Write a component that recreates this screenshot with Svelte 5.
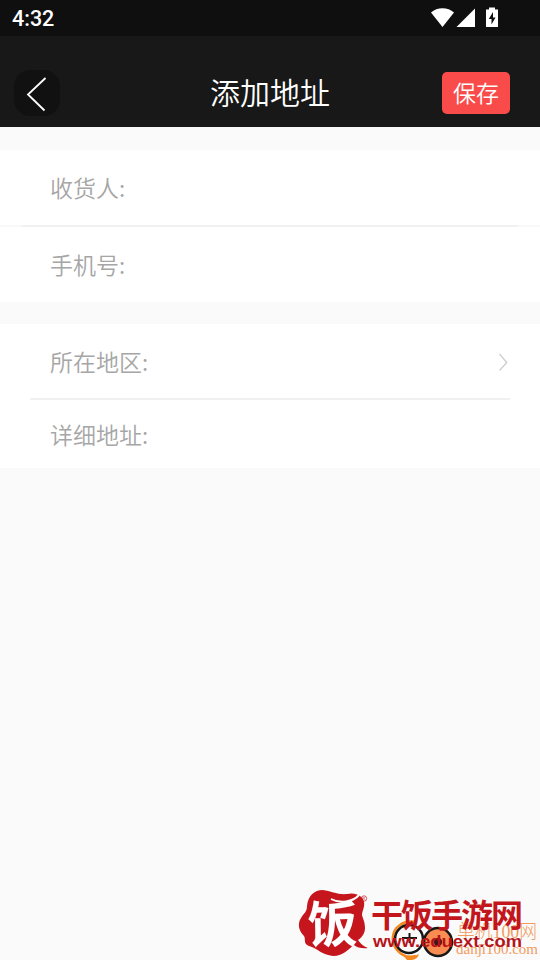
<script>
  let title = '添加地址';

  let contact = [
    { name: 'receiver', label: '收货人:' },
    { name: 'phone', label: '手机号:' }
  ];
</script>

<div class="page">
  <div class="status-bar">
    <span class="time">4:32</span>
    <svg class="status-icons" width="70" height="36" viewBox="430 0 70 36">
      <path d="M431 12.500C437 6.700 448 6.700 454 12.500L442.500 27Z" />
      <path d="M456.500 27L475 8.500V27Z" />
      <path d="M486 9.500h3V7.500h6v2h3V27H486Z" />
      <path class="bolt" d="M493 12L488.800 19H491.500V24.500L495.500 17.500H493Z" />
    </svg>
  </div>

  <header class="nav">
    <button class="back" aria-label="返回">
      <svg width="46" height="46" viewBox="0 0 46 46">
        <path d="M31.500 8L14 24.500L30.500 40.500" />
      </svg>
    </button>
    <h1>{title}</h1>
    <button class="save">保存</button>
  </header>

  <section class="group contact">
    {#each contact as field (field.name)}
      <div class="row">
        <span class="label">{field.label}</span>
      </div>
    {/each}
  </section>

  <section class="group address">
    <div class="row region">
      <span class="label">所在地区:</span>
      <svg class="arrow" width="12" height="20" viewBox="0 0 12 20">
        <path d="M1.500 3L8.800 11.500L1.500 19.500" />
      </svg>
    </div>
    <div class="row detail">
      <span class="label">详细地址:</span>
    </div>
  </section>

  <svg class="watermark" width="250" height="80" viewBox="290 880 250 80">
    <g class="danji">
      <path class="ring" d="M415 922C409 921 404 922 400 925C391 931 391 943 397 950C402 956 409 958 416 956" />
      <path class="ring-tip" d="M402 954Q410 959 419 954Q418 959 412 960H407Z" />
      <circle class="eye" cx="409" cy="939" r="14" />
      <path class="mark" d="M402 938H417M409.500 933V943" />
      <circle class="eye fill" cx="438" cy="942" r="14" />
      <circle class="pupil" cx="438" cy="942" r="4" />
      <text class="danji-name" x="457" y="938" textLength="80" lengthAdjust="spacingAndGlyphs">单机100网</text>
      <text class="danji-url" x="456" y="954" textLength="82" lengthAdjust="spacingAndGlyphs">danji100.com</text>
    </g>
    <path class="seal" d="M307 906C308 896 314 890 323 890C331 891 338 895 347 894C356 892 363 896 364 902C365 907 362 911 362 915C363 919 365 922 365 928C365 934 361 938 358 940Q362 946 368 948Q359 949 354 945C348 949 344 956 333 956C322 955 317 948 309 946C303 944 306 939 304 936C299 931 297 924 301 918C304 913 307 912 307 906Z" />
    <path class="fold" d="M331 899C340 904 353 902 359 895" />
    <text class="seal-text" transform="translate(308 943) rotate(-1)">饭</text>
    <circle class="reg" cx="364" cy="898.500" r="2.700" />
    <text class="reg-text" x="362.500" y="900">R</text>
    <text class="brand" x="371" y="927" textLength="152">干饭手游网</text>
    <text class="brand-url" x="373" y="947" textLength="149" lengthAdjust="spacingAndGlyphs">www.eduext.com</text>
  </svg>
</div>

<style>
  :global(body) {
    margin: 0;
    background: #fafafa;
  }
  .page {
    position: relative;
    width: 540px;
    height: 960px;
    overflow: hidden;
    background: #fafafa;
    font-family: 'Noto Sans CJK SC', sans-serif;
  }
  .status-bar {
    display: flex;
    justify-content: space-between;
    box-sizing: border-box;
    height: 36px;
    padding: 0 40px 0 12px;
    background: #0f0f0f;
  }
  .time {
    color: #fff;
    font: 500 21.5px/38px Roboto, sans-serif;
  }
  .status-icons {
    fill: #fff;
  }
  .status-icons .bolt {
    fill: #0f0f0f;
  }
  .nav {
    display: grid;
    grid-template-columns: 98px 1fr 98px;
    align-items: center;
    box-sizing: border-box;
    height: 91px;
    padding-top: 23px;
    background: #181818;
  }
  button {
    padding: 0;
    border: 0;
    font-family: inherit;
  }
  .back {
    width: 46px;
    height: 46px;
    margin-left: 14px;
    border-radius: 16px;
    background: #111;
  }
  .back svg {
    display: block;
  }
  .back path {
    fill: none;
    stroke: #fff;
    stroke-width: 1.8;
  }
  h1 {
    margin: 0;
    padding-bottom: 4px;
    color: #fff;
    font-size: 30px;
    font-weight: 350;
    line-height: 44px;
    text-align: center;
  }
  .save {
    width: 68px;
    height: 42px;
    padding-bottom: 1px;
    border-radius: 5px;
    background: #fa4b4b;
    color: #fff;
    font-size: 23px;
    font-weight: 350;
    line-height: 41px;
  }
  .group {
    background: #fff;
  }
  .contact {
    margin-top: 23px;
  }
  .address {
    margin-top: 22px;
  }
  .row {
    display: flex;
    align-items: center;
    justify-content: space-between;
    height: 75px;
    padding: 0 30px 0 50px;
  }
  .contact .row + .row {
    border-top: 2px solid;
    border-image: linear-gradient(to right, #f8f8f8 24px, #f0f0f0 24px, #f0f0f0 516px, #f8f8f8 516px) 2;
  }
  .contact .label {
    padding-bottom: 2px;
  }
  .region {
    height: 74px;
    margin: 0 30px;
    padding: 0 0 0 20px;
    border-bottom: 2px solid #f0f0f0;
  }
  .detail {
    height: 68px;
  }
  .detail .label {
    padding-bottom: 1px;
  }
  .label {
    color: #a6a6a6;
    font-size: 23px;
    font-weight: 350;
  }
  .arrow path {
    fill: none;
    stroke: #ccc;
    stroke-width: 1.2;
  }
  .watermark {
    position: absolute;
    right: 0;
    bottom: 0;
  }
  .ring {
    fill: none;
    stroke: #f5881f;
    stroke-width: 2.5;
  }
  .ring-tip {
    fill: #f5881f;
  }
  .eye {
    fill: none;
    stroke: #171717;
    stroke-width: 2.5;
  }
  .eye.fill {
    fill: #f98c51;
  }
  .mark {
    stroke: #171717;
    stroke-width: 2;
  }
  .pupil {
    fill: #3b1715;
  }
  .danji-name,
  .danji-url {
    fill: #f29a60;
    font-family: 'Liberation Serif', 'Noto Sans CJK SC', serif;
    font-size: 19px;
    font-weight: 300;
  }
  .danji-url {
    font-size: 15px;
  }
  .seal {
    fill: #c4161c;
  }
  .fold {
    fill: none;
    stroke: #fff;
    stroke-width: 2;
  }
  .seal-text {
    fill: #fff;
    font-size: 50px;
    font-weight: 700;
  }
  .reg {
    fill: none;
    stroke: #c4161c;
    stroke-width: 0.7;
  }
  .reg-text {
    fill: #c4161c;
    font: 4px 'Liberation Sans', sans-serif;
  }
  .brand {
    fill: #c2161c;
    font-size: 32px;
    font-weight: 700;
  }
  .brand-url {
    fill: #b5131b;
    font: 700 17px 'Liberation Sans', sans-serif;
  }
</style>
